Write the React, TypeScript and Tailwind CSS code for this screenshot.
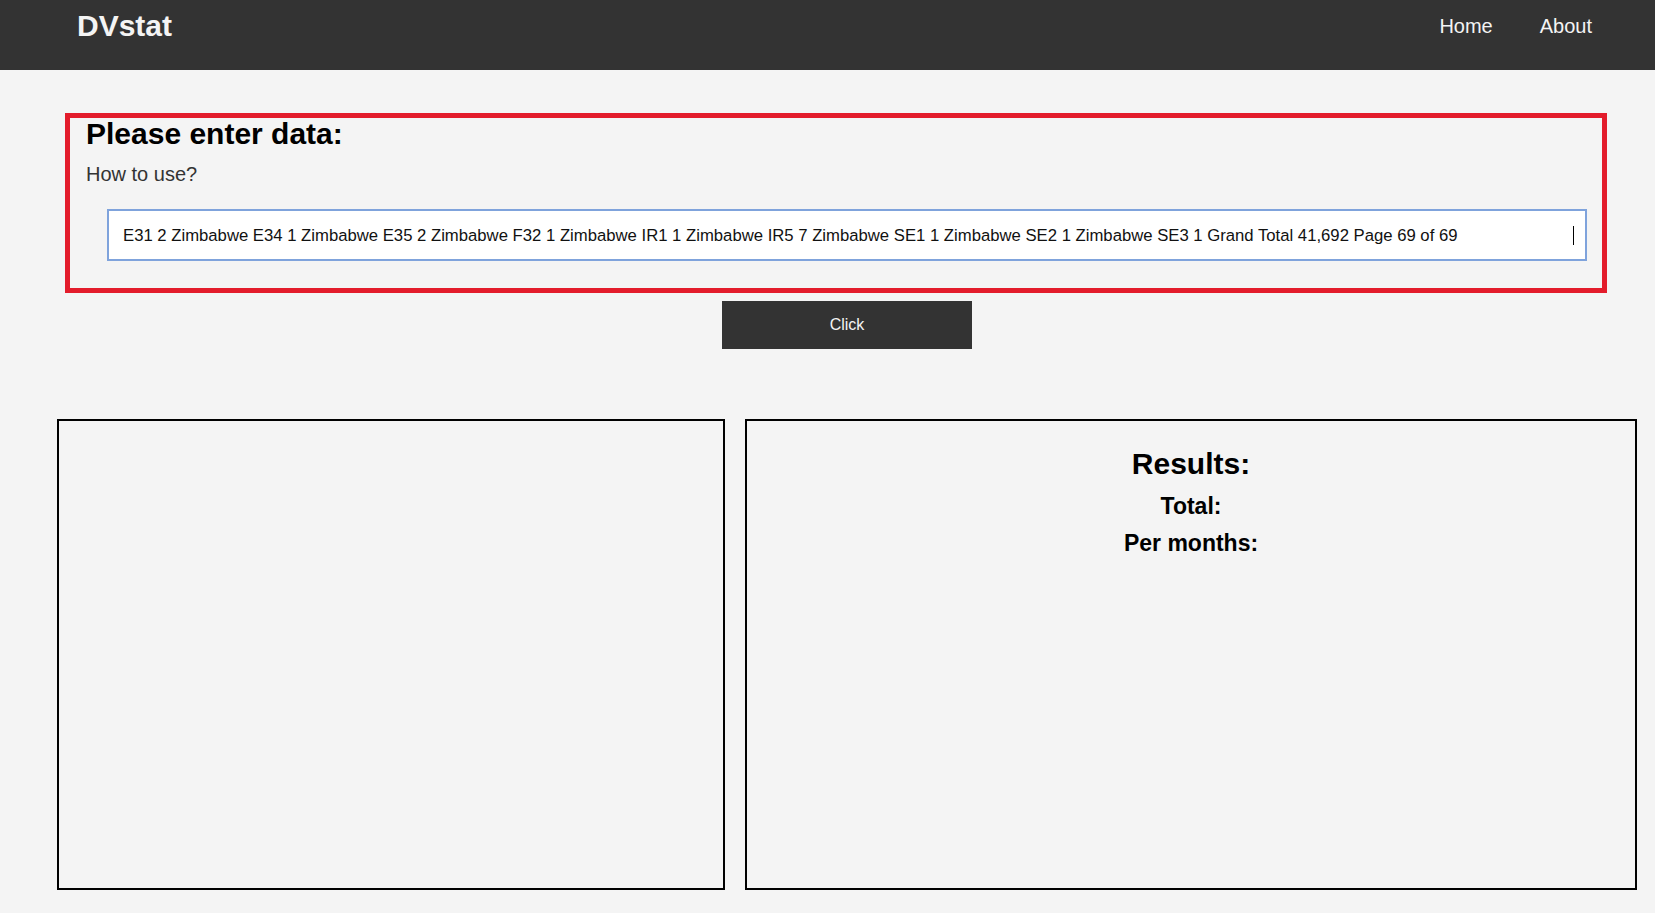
export default function App() {
    return (
        <div className="min-h-[913px] bg-[#f4f4f4] font-['Liberation_Sans',Arial,sans-serif] text-black">
            {/* navbar */}
            <nav className="flex h-[70px] items-start justify-between bg-[#333333] pl-[77px] pr-[63px]">
                <a className="mt-[11px] text-[30px] font-bold leading-[30px] text-[#f4f4f4]">DVstat</a>
                <div className="mt-[16px] flex gap-[47px] text-[20px] leading-[20px] text-[#f4f4f4]">
                    <a>Home</a>
                    <a>About</a>
                </div>
            </nav>

            {/* data input */}
            <div className="ml-[65px] mt-[43px] w-[1542px] border-[5px] border-[#e31c2b] pb-[27px] pl-[16px] pt-[1px]">
                <h2 className="text-[30px] font-bold leading-[30px]">Please enter data:</h2>
                <p className="mt-[15px] text-[20px] leading-[20px] text-[#333333]">How to use?</p>
                <div className="relative ml-[21px] mt-[25px] w-[1480px]">
                    <input
                        type="text"
                        readOnly
                        value="E31 2 Zimbabwe E34 1 Zimbabwe E35 2 Zimbabwe F32 1 Zimbabwe IR1 1 Zimbabwe IR5 7 Zimbabwe SE1 1 Zimbabwe SE2 1 Zimbabwe SE3 1 Grand Total 41,692 Page 69 of 69"
                        className="h-[52px] w-full border-2 border-[#7fa3dc] bg-white pl-[14px] pr-[13px] pt-[2px] text-[16.7px] text-[#111111] outline-none"
                    />
                    <span className="absolute left-[1466px] top-[17px] h-[19px] w-px bg-black" />
                </div>
            </div>

            <button className="ml-[722px] mt-[8px] flex h-[48px] w-[250px] items-center justify-center bg-[#333333] text-[16px] text-[#f4f4f4]">
                Click
            </button>

            {/* output panels */}
            <div className="ml-[57px] mt-[70px] flex gap-[20px]">
                <div className="h-[471px] w-[668px] border-2 border-black" />
                <div className="flex h-[471px] w-[892px] flex-col items-center border-2 border-black pt-[28px]">
                    <h2 className="text-[30px] font-bold leading-[30px]">Results:</h2>
                    <h3 className="mt-[16px] text-[23px] font-bold leading-[23px]">Total:</h3>
                    <h3 className="mt-[14px] text-[23px] font-bold leading-[23px]">Per months:</h3>
                </div>
            </div>
        </div>
    )
}
